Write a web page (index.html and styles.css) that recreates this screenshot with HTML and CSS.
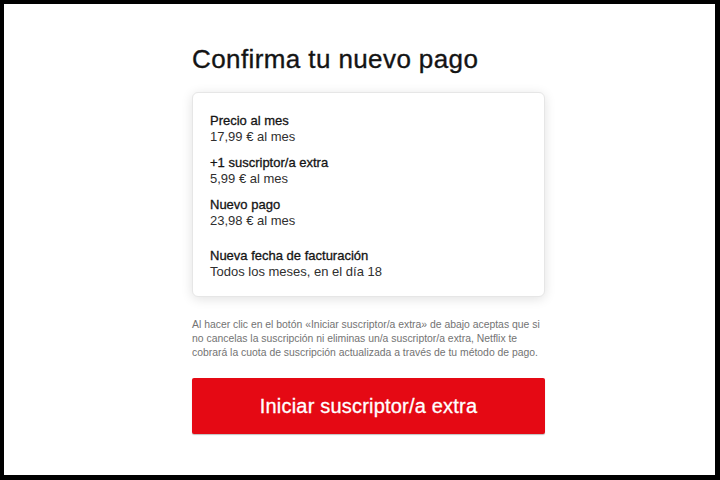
FILE: index.html
```html
<!DOCTYPE html>
<html lang="es">
<head>
<meta charset="utf-8">
<title>Confirma tu nuevo pago</title>
<link rel="stylesheet" href="styles.css">
</head>
<body>
  <main class="page">
    <section class="column">
      <h1 class="title">Confirma tu nuevo pago</h1>

      <div class="summary">
        <div class="item">
          <div class="label">Precio al mes</div>
          <div class="value">17,99 € al mes</div>
        </div>
        <div class="item">
          <div class="label">+1 suscriptor/a extra</div>
          <div class="value">5,99 € al mes</div>
        </div>
        <div class="item">
          <div class="label">Nuevo pago</div>
          <div class="value">23,98 € al mes</div>
        </div>
        <div class="item item-billing">
          <div class="label">Nueva fecha de facturación</div>
          <div class="value">Todos los meses, en el día 18</div>
        </div>
      </div>

      <p class="legal">Al hacer clic en el botón «Iniciar suscriptor/a extra» de abajo aceptas que si no cancelas la suscripción ni eliminas un/a suscriptor/a extra, Netflix te cobrará la cuota de suscripción actualizada a través de tu método de pago.</p>

      <button class="cta" type="button">Iniciar suscriptor/a extra</button>
    </section>
  </main>
</body>
</html>
```

FILE: styles.css
```css
* {
  box-sizing: border-box;
}

html,
body {
  margin: 0;
  padding: 0;
  background: #000;
}

body {
  width: 720px;
  height: 480px;
  font-family: "Liberation Sans", Arial, Helvetica, sans-serif;
  color: #221f1f;
}

.page {
  height: 480px;
  background: #fff;
  border-style: solid;
  border-color: #000;
  border-width: 4px 5px 5px 4px;
  padding-top: 40px;
}

.column {
  width: 353px;
  margin-left: 188px;
  display: flex;
  flex-direction: column;
}

.title {
  margin: 0;
  font-size: 26px;
  line-height: 30px;
  letter-spacing: 0.4px;
  font-weight: normal;
  color: #141414;
  -webkit-text-stroke: 0.35px #141414;
}

.summary {
  margin-top: 18px;
  height: 205px;
  background: #fff;
  border: 1px solid #e6e6e6;
  border-radius: 6px;
  box-shadow: 0 2px 12px rgba(0, 0, 0, 0.12);
  padding: 20px 17px 16px;
  display: flex;
  flex-direction: column;
  gap: 10px;
}

.item {
  font-size: 13px;
  line-height: 16px;
}

.item-billing {
  margin-top: 9px;
}

.label {
  color: #141414;
  -webkit-text-stroke: 0.3px #141414;
}

.value {
  color: #2f2f2f;
}

.legal {
  margin: 21px 0 0;
  font-size: 10.4px;
  line-height: 14px;
  color: #737373;
}

.cta {
  margin-top: 18px;
  height: 56px;
  width: 100%;
  border: 0;
  border-radius: 2px;
  background: #e50914;
  color: #fff;
  font-family: inherit;
  font-size: 20px;
  letter-spacing: 0.2px;
  -webkit-text-stroke: 0.3px #fff;
  box-shadow: 0 1px 1px rgba(0, 0, 0, 0.25);
  cursor: pointer;
}
```
